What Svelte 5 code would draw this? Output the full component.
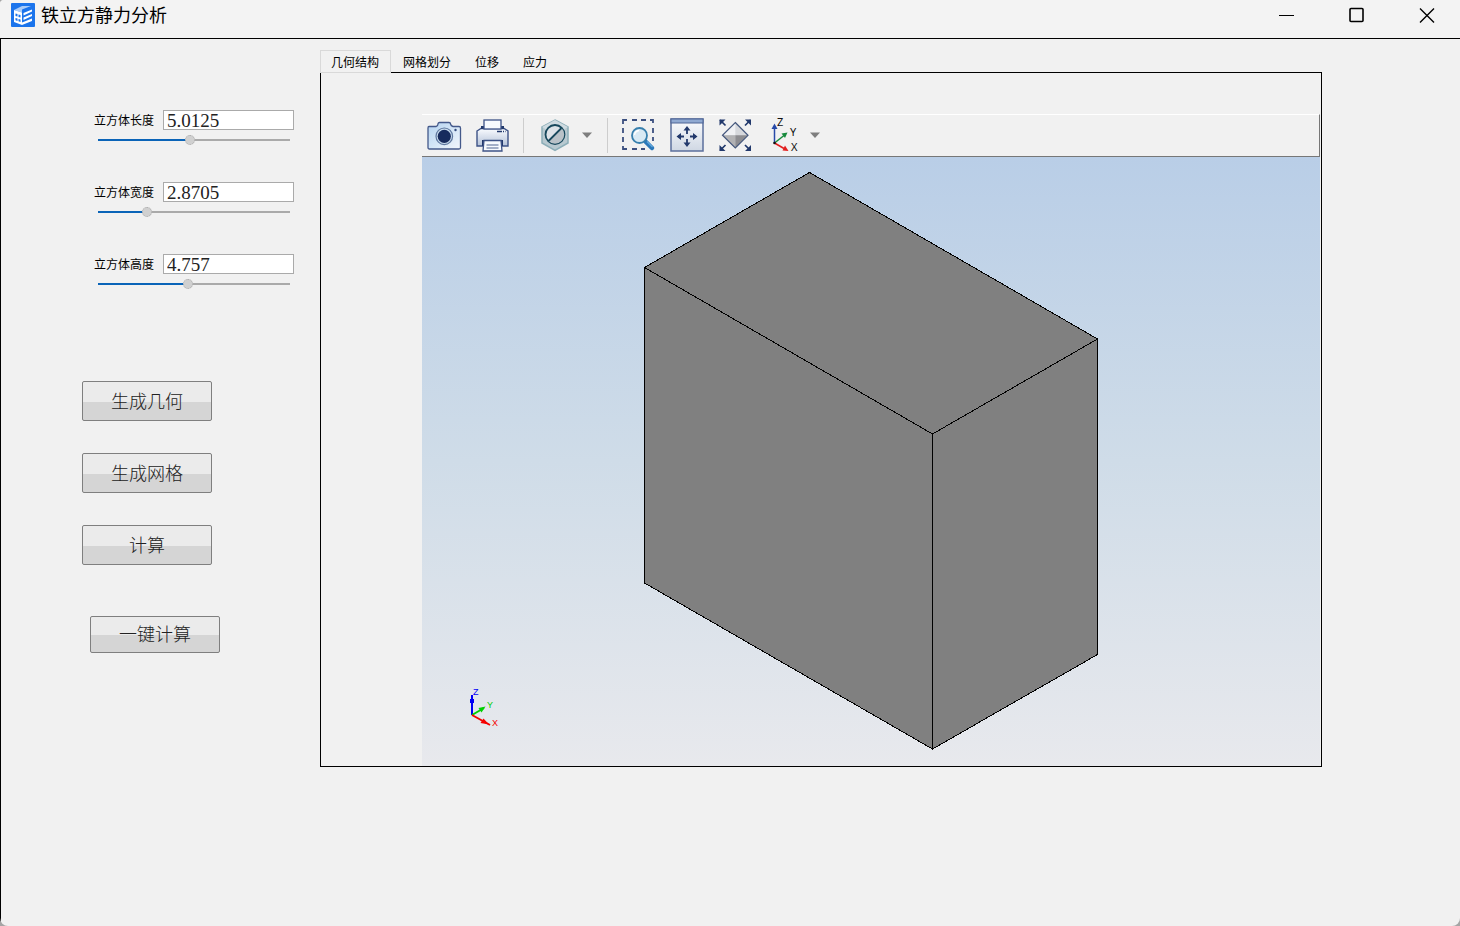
<!-- App.svelte -->
<script>
  let params = [
    { id: 'length', label: '立方体长度', value: 5.0125, min: 1, max: 9.4 },
    { id: 'width', label: '立方体宽度', value: 2.8705, min: 1, max: 8.7 },
    { id: 'height', label: '立方体高度', value: 4.757, min: 1, max: 9 }
  ];

  const tabs = ['几何结构', '网格划分', '位移', '应力'];
  let activeTab = tabs[0];

  function percent(p) {
    return ((p.value - p.min) / (p.max - p.min)) * 100;
  }
</script>

<svelte:head>
  <title>铁立方静力分析</title>
</svelte:head>

<div class="window">
  <header class="titlebar">
    <svg class="logo" viewBox="0 0 24 24" aria-hidden="true">
      <rect width="24" height="24" rx="1" fill="#1b74ec" />
      <path d="M3 7 L11 3 L20 3 L11 6.500 V9.500 Z" fill="#a9cbf8" />
      <path d="M3 7 L11 9.500 V22 L3 19 Z" fill="#fff" />
      <path d="M4.500 10.500 L6.500 11 V13.500 L4.500 13 Z M7.500 11.500 L9.500 12 V14.500 L7.500 14 Z M4.500 15 L6.500 15.500 V18 L4.500 17.200 Z M7.500 16 L9.500 16.500 V19 L7.500 18.300 Z" fill="#1b74ec" />
      <path d="M12.500 10 L21 6.500 V8.500 L12.500 12.500 Z M12.500 14.500 L21 11 V13 L12.500 17 Z M11 19.500 L21 15.500 V18 L11 22 Z" fill="#fff" />
    </svg>
    <h1>铁立方静力分析</h1>
    <div class="controls">
      <button type="button" aria-label="最小化">
        <svg viewBox="0 0 16 16"><path d="M0 8.500 H15" /></svg>
      </button>
      <button type="button" aria-label="最大化">
        <svg viewBox="0 0 16 16"><rect x="1" y="1.500" width="13" height="13" rx="1" stroke-width="1.600" /></svg>
      </button>
      <button type="button" aria-label="关闭">
        <svg viewBox="0 0 16 16"><path d="M1 1.500 L15 15.500 M15 1.500 L1 15.500" stroke-width="1.400" /></svg>
      </button>
    </div>
  </header>

  <main>
    <aside>
      <form class="params" on:submit|preventDefault>
        {#each params as p}
          <div class="param">
            <div class="row">
              <label for={p.id}>{p.label}</label>
              <input type="text" id={p.id} bind:value={p.value} />
            </div>
            <input
              type="range"
              aria-label={p.label}
              min={p.min}
              max={p.max}
              step="any"
              bind:value={p.value}
              style="--pos: {percent(p)}%"
            />
          </div>
        {/each}
      </form>

      <div class="actions">
        <button type="button">生成几何</button>
        <button type="button">生成网格</button>
        <button type="button">计算</button>
        <button type="button" class="all">一键计算</button>
      </div>
    </aside>

    <section class="workspace">
      <div class="tabs" role="tablist">
        {#each tabs as tab}
          <button
            type="button"
            role="tab"
            aria-selected={activeTab === tab}
            class:active={activeTab === tab}
            on:click={() => (activeTab = tab)}
          >{tab}</button>
        {/each}
      </div>

      <div class="panel">
        <div class="toolbar">
          <button type="button" aria-label="截图">
            <svg viewBox="0 0 36 36">
              <defs>
                <linearGradient id="cam" x1="0" y1="0" x2="1" y2="1">
                  <stop offset="0" stop-color="#b4d3f0" />
                  <stop offset="1" stop-color="#f2f7fc" />
                </linearGradient>
              </defs>
              <path d="M3 9.500 H10 Q12 9 12 7 Q12 5.500 13.500 5.500 H23 Q24.500 5.500 24.500 7 Q25 9 27 9.500 H33 Q34.500 9.500 34.500 11 V30.500 Q34.500 32 33 32 H3.500 Q2 32 2 30.500 V11 Q2 9.500 3 9.500 Z" fill="url(#cam)" stroke="#44598a" stroke-width="1.300" />
              <circle cx="18.300" cy="19.300" r="8.300" fill="#c9dcee" stroke="#5f789f" stroke-width="1.200" />
              <circle cx="18.300" cy="19.300" r="6.600" fill="#172b5d" />
              <circle cx="29.500" cy="13" r="1.200" fill="#344b7c" />
            </svg>
          </button>
          <button type="button" aria-label="打印">
            <svg viewBox="0 0 36 36">
              <defs>
                <linearGradient id="prn" x1="0" y1="0" x2="0" y2="1">
                  <stop offset="0" stop-color="#fafcff" />
                  <stop offset="1" stop-color="#b3c1d8" />
                </linearGradient>
              </defs>
              <path d="M3 14 L7 11.500 H30 L34 14 V29 H3 Z" fill="url(#prn)" stroke="#3e5387" stroke-width="1.400" />
              <path d="M7 9 H10 V12 H7 Z M27 9 H30 V12 H27 Z M8 23 H10 V29 H8 Z M27 23 H29 V29 H27 Z" fill="#22396c" />
              <rect x="10" y="3" width="17" height="9" fill="#f7fafe" stroke="#3e5387" stroke-width="1.300" />
              <path d="M10 23.500 H27 L28 34 H9 Z" fill="#f7fafe" stroke="#3e5387" stroke-width="1.300" />
              <path d="M23 14.500 H31.500" stroke="#22396c" stroke-width="1.500" stroke-dasharray="5 1 1 1" />
              <path d="M12.500 28 H24.500 M12.500 31 H24.500" stroke="#51658f" stroke-width="1.200" />
            </svg>
          </button>
          <span class="sep"></span>
          <div class="split">
            <button type="button" aria-label="透明度">
              <svg viewBox="0 0 36 36">
                <path d="M18 3 L31 10 V26 L18 33.300 L5 26 V10 Z" fill="#b8c9d0" stroke="#8caeb8" stroke-width="1.500" />
                <path d="M18 3 L31 10 L18 18 L5 10 Z" fill="#cfdbe1" />
                <circle cx="18" cy="17.500" r="9.500" fill="#dde3e8" stroke="#17485c" stroke-width="1.800" />
                <path d="M24.500 11 A9 9 0 0 1 11.500 24 Z" fill="#b9c2c8" />
                <path d="M24.500 11 L11.500 24" stroke="#17485c" stroke-width="1.800" />
              </svg>
            </button>
            <button type="button" class="arrow" aria-label="更多透明度选项">
              <svg viewBox="0 0 14 36"><path d="M2 15.500 H12 L7 21 Z" fill="#7e7e7e" /></svg>
            </button>
          </div>
          <span class="sep"></span>
          <button type="button" aria-label="框选缩放">
            <svg viewBox="0 0 36 36">
              <path d="M2 7 V3 H6 M11 3 H16 M20 3 H25 M29 3 H32 V6 M32 11 V16 M32 20 V24 M2 11 V16 M2 20 V25 M2 29 V32 H6 M11 32 H16 M20 32 H24" fill="none" stroke="#3c5080" stroke-width="1.800" />
              <path d="M24.500 24.500 L31 31" stroke="#2b78ba" stroke-width="4.500" stroke-linecap="round" />
              <path d="M26 24.500 L31.500 30" stroke="#65a9dc" stroke-width="1.200" />
              <circle cx="18.500" cy="18.500" r="7.500" fill="#d9eaf4" stroke="#377fad" stroke-width="1.800" />
              <path d="M13.500 18 Q14 14 18 13.500" fill="none" stroke="#fff" stroke-width="1.400" />
            </svg>
          </button>
          <button type="button" aria-label="缩放到窗口">
            <svg viewBox="0 0 36 36">
              <defs>
                <linearGradient id="fit" x1="0" y1="0" x2="0" y2="1">
                  <stop offset="0" stop-color="#fbfcfe" />
                  <stop offset="1" stop-color="#cfd7e3" />
                </linearGradient>
              </defs>
              <rect x="2" y="2" width="32" height="32" fill="url(#fit)" stroke="#5b6f9c" stroke-width="1.500" />
              <rect x="2" y="2" width="32" height="4" fill="#8fa9d2" stroke="#4d6496" />
              <path d="M18 11 V17 M18 22 V28 M9 19.500 H15 M21 19.500 H27" stroke="#22396c" stroke-width="1.800" />
              <path d="M18 9 L21.500 13.500 H14.500 Z M18 30 L21.500 25.500 H14.500 Z M7.500 19.500 L12 16 V23 Z M28.500 19.500 L24 16 V23 Z" fill="#22396c" />
            </svg>
          </button>
          <button type="button" aria-label="缩放到全部">
            <svg viewBox="0 0 36 36">
              <path d="M18.300 5.500 L31 18.300 L18.300 31 L5.500 18.300 Z" fill="#d6d8dc" />
              <path d="M18.300 5.500 V18.300 H5.500 Z" fill="#f0f1f4" />
              <path d="M5.500 18.300 H18.300 V31 Z" fill="#b2b2b4" />
              <path d="M31 18.300 H18.300 V31 Z" fill="#8d8d91" />
              <path d="M18.300 5.500 L31 18.300 L18.300 31 L5.500 18.300 Z" fill="none" stroke="#44577c" stroke-width="1.200" />
              <path d="M3 3 L8.500 8.500 M33.500 3 L28 8.500 M3 33.500 L8.500 28 M33.500 33.500 L28 28" stroke="#22396c" stroke-width="1.700" />
              <path d="M2.500 2.500 H8.500 L2.500 8.500 Z M34 2.500 V8.500 L28 2.500 Z M2.500 34 V28 L8.500 34 Z M34 34 H28 L34 28 Z" fill="#22396c" />
            </svg>
          </button>
          <div class="split">
            <button type="button" aria-label="视图方向">
              <svg viewBox="0 0 36 36">
                <path d="M9.500 26 V11" stroke="#2749a8" stroke-width="1.500" />
                <path d="M9.500 6.500 L12.500 12 H6.500 Z" fill="#2749a8" />
                <path d="M9.500 26 L19 18.500" stroke="#168a3c" stroke-width="1.500" />
                <path d="M22.500 15.500 L20 21 L16.500 16.500 Z" fill="#168a3c" />
                <path d="M9.500 26 L19 31.500" stroke="#e21f1f" stroke-width="1.500" />
                <path d="M23.500 34 L17.500 33.500 L20 28.500 Z" fill="#e21f1f" />
                <circle cx="9.500" cy="26" r="1.300" fill="#111" />
                <text x="12" y="9">Z</text>
                <text x="25" y="19">Y</text>
                <text x="26" y="34">X</text>
              </svg>
            </button>
            <button type="button" class="arrow" aria-label="更多视图方向">
              <svg viewBox="0 0 14 36"><path d="M2 15.500 H12 L7 21 Z" fill="#7e7e7e" /></svg>
            </button>
          </div>
        </div>

        <div class="scene">
          <svg viewBox="0 0 898 609" role="img" aria-label="立方体几何结构">
            <g class="cube">
              <polygon points="387.5,15.5 675.5,182 510.5,277 222.5,110.5" />
              <polygon points="222.5,110.5 510.5,277 510.5,592 222.5,426" />
              <polygon points="510.5,277 675.5,182 675.5,497.5 510.5,592" />
            </g>
            <g class="triad">
              <g fill="#0000f5" stroke="#0000f5">
                <path d="M50 558 V538" stroke-width="2" />
                <rect x="48" y="542" width="4" height="4" stroke="none" />
                <text x="51" y="538">Z</text>
              </g>
              <g fill="#00d000" stroke="#00d000">
                <path d="M50 558 L62 551" stroke-width="2" />
                <path d="M63.500 549.500 L56.500 551 L59.500 555.500 Z" stroke="none" />
                <text x="65" y="551">Y</text>
              </g>
              <g fill="#f50000" stroke="#f50000">
                <path d="M50 558 L68 568" stroke-width="2" />
                <path d="M67 567.500 L61.500 561.500 L58.500 566 Z" stroke="none" />
                <text x="70" y="569">X</text>
              </g>
            </g>
          </svg>
        </div>
      </div>
    </section>
  </main>
</div>

<style>
  :global(body) {
    background: #a5a5a5;
  }

  .window {
    min-height: 100vh;
    display: flex;
    flex-direction: column;
    overflow: hidden;
    border-radius: 4px 0 8px 8px;
    background: #f1f1f1;
    color: #000;
    font-family: 'Noto Sans CJK SC', sans-serif;
    font-size: 12px;
  }

  .titlebar {
    display: flex;
    align-items: center;
    height: 38px;
    box-sizing: border-box;
    padding: 0 0 8px 11px;
    background: #f3f3f3;
  }

  .logo {
    width: 24px;
    height: 24px;
  }

  h1 {
    flex: 1;
    margin: 0 0 2px 6px;
    font-size: 18px;
    font-weight: 400;
    line-height: 24px;
  }

  button {
    padding: 0;
    border: none;
    background: none;
    color: inherit;
    font: inherit;
  }

  svg {
    display: block;
  }

  .controls {
    display: flex;
    gap: 4px;
  }

  .controls button {
    display: flex;
    align-items: center;
    justify-content: center;
    width: 66px;
    height: 30px;
  }

  .controls svg {
    width: 16px;
    height: 16px;
    fill: none;
    stroke: #000;
  }

  main {
    flex: 1;
    display: flex;
    border-top: 1px solid #000;
    border-left: 1px solid #000;
  }

  aside {
    flex: none;
    padding: 71px 26px 0 81px;
  }

  .params {
    display: flex;
    flex-direction: column;
    gap: 37px;
    margin-left: 12px;
  }

  .row {
    display: flex;
    align-items: center;
    gap: 9px;
  }

  label {
    width: 60px;
    white-space: nowrap;
    line-height: 20px;
  }

  input[type='text'] {
    box-sizing: border-box;
    width: 131px;
    height: 20px;
    padding: 1px 3px 0;
    border: 1px solid #aaa;
    background: #fff;
    color: #222;
    font-family: 'Liberation Serif', serif;
    font-size: 19px;
    line-height: 18px;
  }

  input[type='range'] {
    display: block;
    appearance: none;
    width: 192px;
    height: 10px;
    margin: 5px 4px 0;
    background: linear-gradient(#0a64b8, #0a64b8) 0 4px / var(--pos) 2px no-repeat,
      linear-gradient(#aaa, #aaa) 0 4px / 100% 2px no-repeat;
  }

  input[type='range']::-webkit-slider-thumb {
    appearance: none;
    box-sizing: border-box;
    width: 10px;
    height: 10px;
    border: 1px dotted #aaa;
    border-radius: 50%;
    background: #d0d0d0;
  }

  .actions {
    display: flex;
    flex-direction: column;
    align-items: flex-start;
    gap: 32px;
    margin-top: 92px;
  }

  .actions button {
    box-sizing: border-box;
    width: 130px;
    height: 40px;
    padding-bottom: 3px;
    border: 1px solid #7f7f7f;
    border-radius: 2px;
    background: linear-gradient(#ebebeb 52%, #d5d5d5 52%);
    color: #222;
    font-size: 18px;
    font-weight: 300;
    line-height: 24px;
  }

  .actions .all {
    height: 37px;
    margin: 19px 0 0 8px;
  }

  .workspace {
    flex: 1;
    display: flex;
    flex-direction: column;
    min-width: 0;
    margin: 11px 138px 159px 0;
  }

  .tabs {
    display: flex;
    height: 22px;
  }

  .tabs button {
    padding: 0 12px;
    line-height: 24px;
  }

  .tabs .active {
    z-index: 1;
    box-sizing: border-box;
    height: 23px;
    padding: 0 11px 0 10px;
    border: 1px solid #d9d9d9;
    background: #f1f1f1;
    line-height: 22px;
  }

  .panel {
    flex: 1;
    display: flex;
    flex-direction: column;
    padding: 41px 1px 0 101px;
    border: 1px solid #000;
  }

  .toolbar {
    display: flex;
    align-items: flex-start;
    gap: 12px;
    box-sizing: border-box;
    height: 43px;
    padding: 2px 0 0 4px;
    border-top: 1px solid #fff;
    border-right: 1px solid #777;
    border-bottom: 1px solid #777;
  }

  .toolbar svg {
    width: 36px;
    height: 36px;
    overflow: visible;
  }

  .toolbar text {
    fill: #111;
    font-family: 'Noto Sans', sans-serif;
    font-size: 11px;
  }

  .split {
    display: flex;
    gap: 7px;
  }

  .toolbar .arrow svg {
    width: 14px;
  }

  .sep {
    width: 1px;
    height: 35px;
    margin: 1px 1px 0;
    background: #cdcdcd;
  }

  .scene {
    flex: 1;
    display: flex;
    min-height: 0;
    background: linear-gradient(#b9cee7, #cfdce8 50%, #e8e9ed);
  }

  .scene svg {
    flex: 1;
    width: 100%;
    min-width: 0;
  }

  .cube polygon {
    fill: #808080;
    stroke: #000;
    shape-rendering: crispEdges;
  }

  .triad text {
    stroke: none;
    font-family: 'Liberation Sans', sans-serif;
    font-size: 9px;
  }
</style>
